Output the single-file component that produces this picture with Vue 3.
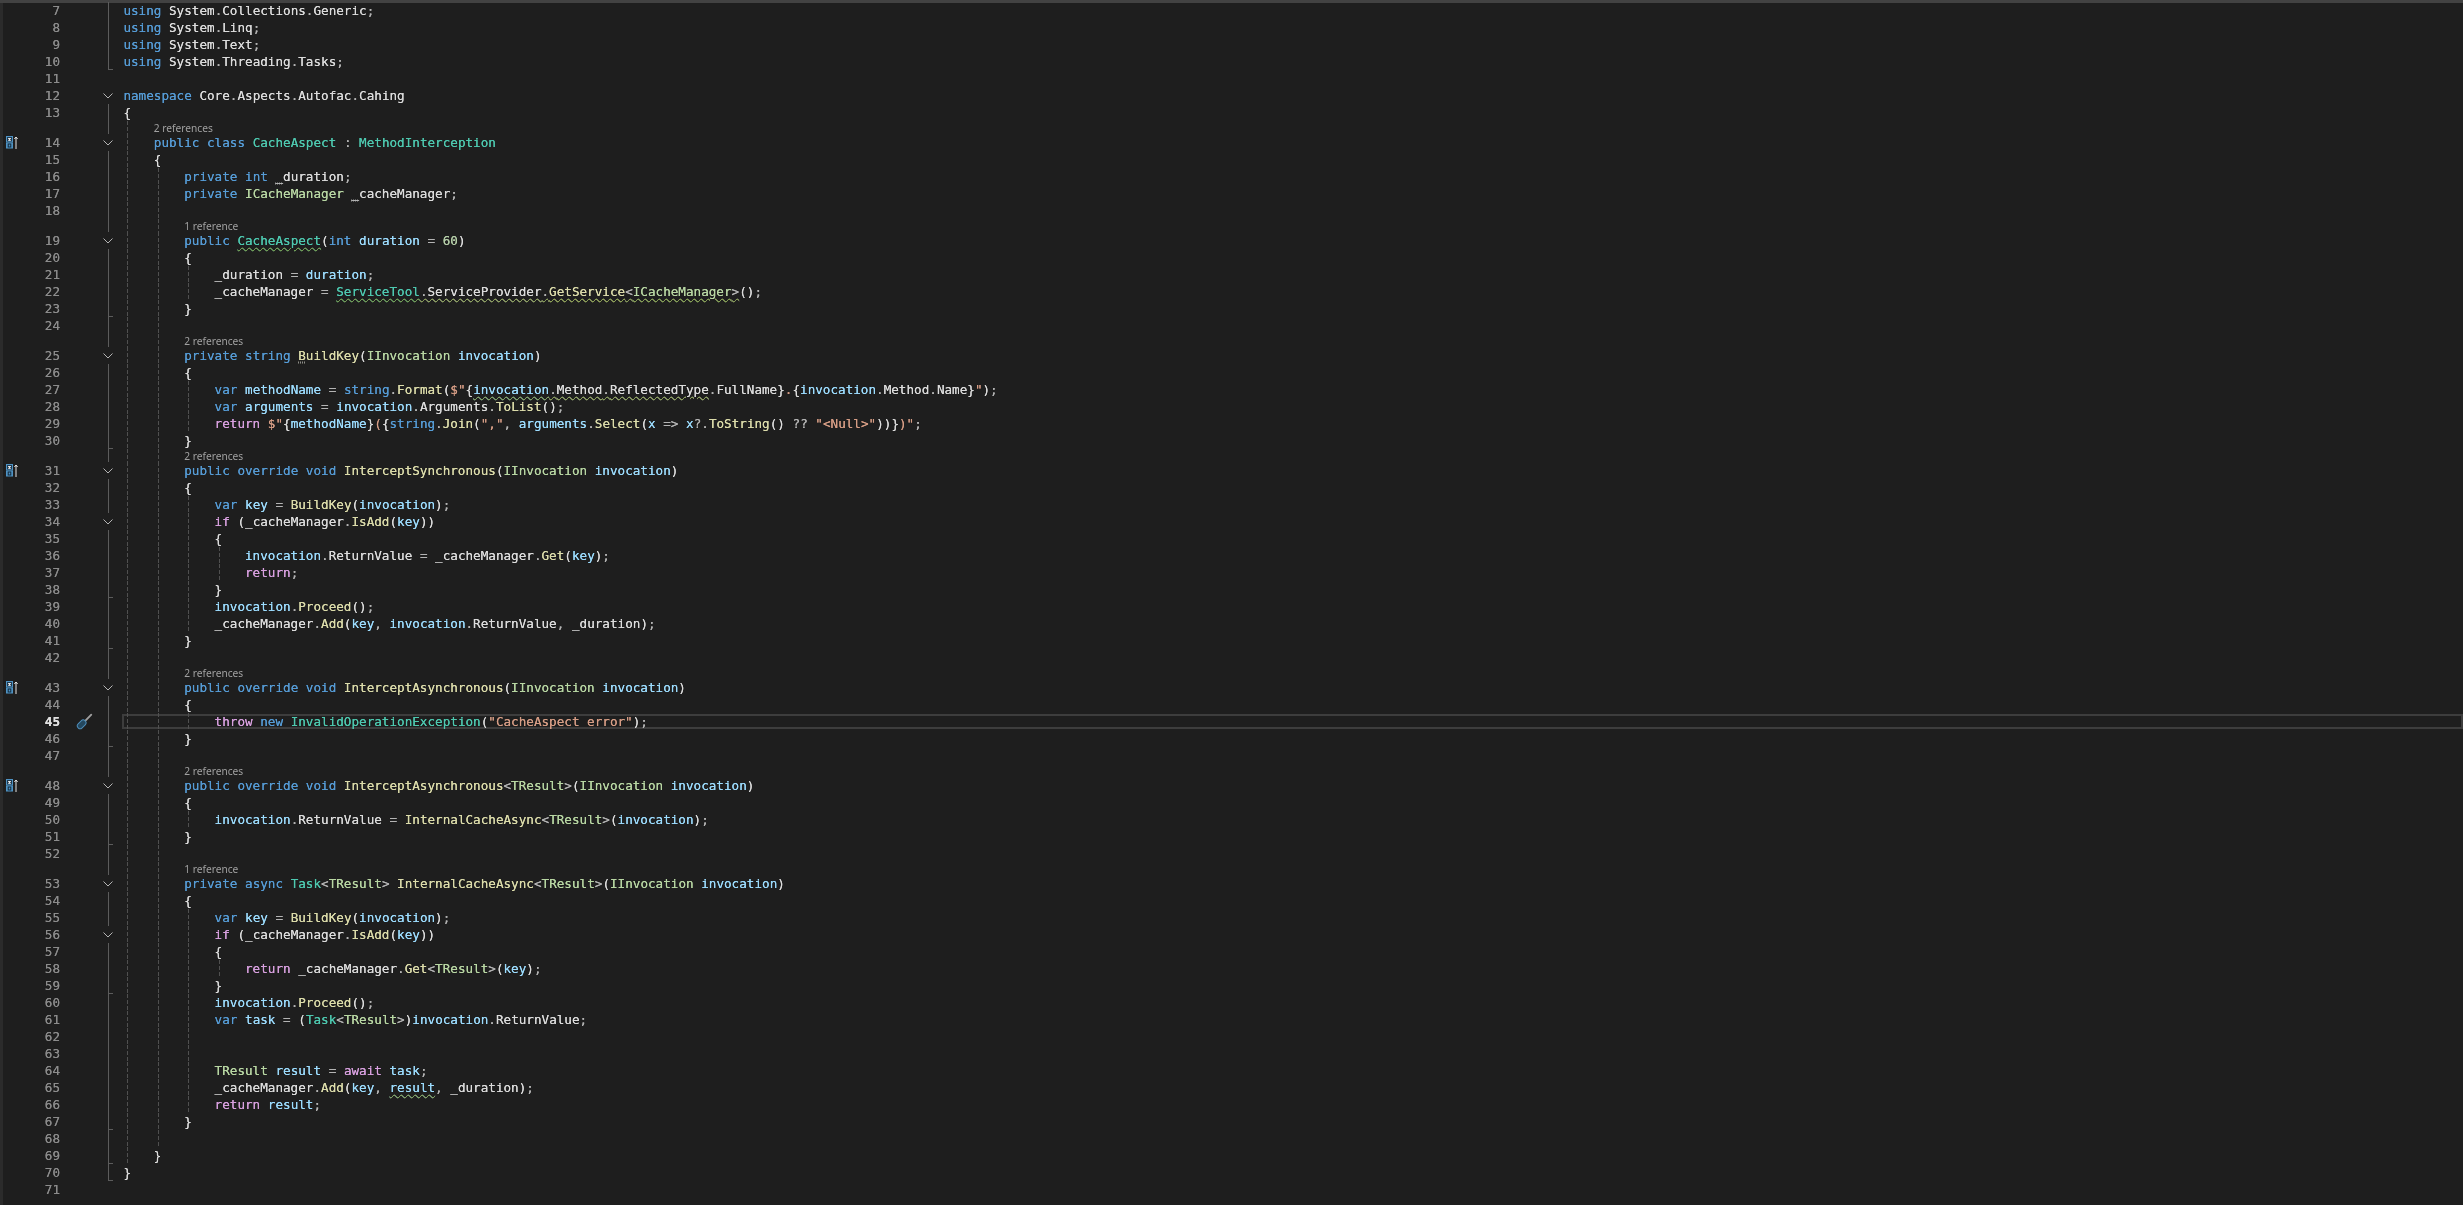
<script setup>
const source = [
  'using System.Collections.Generic;',
  'using System.Linq;',
  'using System.Text;',
  'using System.Threading.Tasks;',
  '',
  'namespace Core.Aspects.Autofac.Cahing',
  '{',
  '    public class CacheAspect : MethodInterception',
  '    {',
  '        private int ^_duration;',
  '        private ICacheManager ^_cacheManager;',
  '',
  '        public ~CacheAspect~(int duration = 60)',
  '        {',
  '            _duration = duration;',
  '            _cacheManager = ~ServiceTool.ServiceProvider.GetService<ICacheManager>~();',
  '        }',
  '',
  '        private string ^BuildKey(IInvocation invocation)',
  '        {',
  '            var methodName = string.Format(`$"`{~invocation.Method.ReflectedType~.FullName}`.`{invocation.Method.Name}`"`);',
  '            var arguments = invocation.Arguments.ToList();',
  '            return `$"`{methodName}`(`{string.Join(",", arguments.Select(x => x?.ToString() ?? "<Null>"))}`)"`;',
  '        }',
  '        public override void InterceptSynchronous(IInvocation invocation)',
  '        {',
  '            var key = BuildKey(invocation);',
  '            if (_cacheManager.IsAdd(key))',
  '            {',
  '                invocation.ReturnValue = _cacheManager.Get(key);',
  '                return;',
  '            }',
  '            invocation.Proceed();',
  '            _cacheManager.Add(key, invocation.ReturnValue, _duration);',
  '        }',
  '',
  '        public override void InterceptAsynchronous(IInvocation invocation)',
  '        {',
  '            throw new InvalidOperationException("CacheAspect error");',
  '        }',
  '',
  '        public override void InterceptAsynchronous<TResult>(IInvocation invocation)',
  '        {',
  '            invocation.ReturnValue = InternalCacheAsync<TResult>(invocation);',
  '        }',
  '',
  '        private async Task<TResult> InternalCacheAsync<TResult>(IInvocation invocation)',
  '        {',
  '            var key = BuildKey(invocation);',
  '            if (_cacheManager.IsAdd(key))',
  '            {',
  '                return _cacheManager.Get<TResult>(key);',
  '            }',
  '            invocation.Proceed();',
  '            var task = (Task<TResult>)invocation.ReturnValue;',
  '',
  '',
  '            TResult result = await task;',
  '            _cacheManager.Add(key, ~result~, _duration);',
  '            return result;',
  '        }',
  '',
  '    }',
  '}',
  ''
]

const sets = {
  kw: 'using namespace public class private int string var override void async new',
  ctrl: 'return if throw await',
  cls: 'CacheAspect MethodInterception ServiceTool InvalidOperationException Task',
  ifc: 'ICacheManager IInvocation TResult',
  loc: 'duration invocation methodName arguments key x task result',
  fn: 'Format Join Select ToString ToList GetService BuildKey InterceptSynchronous InterceptAsynchronous InternalCacheAsync IsAdd Get Add Proceed'
}
const wordClass = {}
for (const c in sets) sets[c].split(' ').forEach(w => { wordClass[w] = c })

function tokenize(text) {
  const out = []
  let sq = false
  const re = /`[^`]*`|~|\^?[A-Za-z_]\w*|\d+|"[^"]*"|\s+|./g
  for (const m of text.matchAll(re)) {
    const t = m[0]
    if (t === '~') { sq = !sq; continue }
    const add = (s, c) => out.push({ t: s, c: c + (sq ? ' sq' : '') })
    if (t[0] === '`') add(t.slice(1, -1), 'str')
    else if (t[0] === '"') add(t, 'str')
    else if (t[0] === '^') {
      add(t[1], 'dot ' + (wordClass[t.slice(1)] || ''))
      add(t.slice(2), wordClass[t.slice(1)] || '')
    }
    else if (/^\d/.test(t)) add(t, 'lit')
    else if (/^[A-Za-z_]/.test(t)) add(t, wordClass[t] || '')
    else if (/^[.;=,:?<>]$/.test(t)) add(t, 'p')
    else add(t, '')
  }
  return out
}

const lens = { 14: '2 references', 19: '1 reference', 25: '2 references', 31: '2 references', 43: '2 references', 48: '2 references', 53: '1 reference' }
const folds = new Set([12, 14, 19, 25, 31, 34, 43, 48, 53, 56])
const ends = new Set([10, 23, 30, 38, 41, 46, 51, 59, 67, 69, 70])
const marks = new Set([14, 31, 43, 48])
const ranges = [
  [[14, 69]],
  [[16, 68]],
  [[21, 22], [27, 29], [33, 40], [45, 45], [50, 50], [55, 66]],
  [[36, 37], [58, 58]]
]
const guidesFor = (n, isLens) =>
  ranges.map((rs, i) => (rs.some(([a, b]) => (isLens ? n > a && n <= b || (i === 0 && n === a) : n >= a && n <= b)) ? i : -1)).filter(i => i >= 0)
const hasLine = n => (n >= 7 && n <= 10) || (n >= 13 && n <= 70)

const rows = []
source.forEach((text, i) => {
  const n = i + 7
  const col = text.length - text.trimStart().length
  if (lens[n]) rows.push({ id: 'l' + n, lens: lens[n], indent: col * 7.6, guides: guidesFor(n, true) })
  rows.push({
    id: 'c' + n,
    n,
    tokens: tokenize(text),
    guides: guidesFor(n, false),
    fold: folds.has(n),
    line: hasLine(n) && !folds.has(n),
    end: ends.has(n),
    mark: marks.has(n),
    current: n === 45
  })
})
</script>

<template>
  <div class="editor">
    <div class="topbar"></div>
    <div class="lines">
      <template v-for="r in rows" :key="r.id">
        <div v-if="r.lens" class="row lensrow">
          <div class="glyph"></div>
          <div class="num"></div>
          <div class="tools"></div>
          <div class="fold"><span class="vline"></span></div>
          <div class="code">
            <i v-for="g in r.guides" :key="g" class="guide" :class="'g' + g"></i>
            <span class="lens" :style="{ paddingLeft: 1.4 + r.indent + 'px' }">{{ r.lens }}</span>
          </div>
        </div>
        <div v-else class="row">
          <div class="glyph">
            <svg v-if="r.mark" class="mark" width="12" height="13" viewBox="0 0 12 13">
              <rect x="0.5" y="0.5" width="6" height="5.5" fill="#1f3a50" stroke="#4f93c4" />
              <rect x="2" y="2" width="3" height="0.9" fill="#e8e8e8" />
              <rect x="3" y="2" width="1" height="2.6" fill="#e8e8e8" />
              <rect x="2" y="3.8" width="3" height="0.9" fill="#e8e8e8" />
              <rect x="0" y="6.5" width="7" height="6" fill="#4f93c4" />
              <rect x="2.2" y="8" width="2.6" height="3" fill="none" stroke="#12283a" />
              <path d="M10 13V1M8.4 3L10 1l1.6 2" fill="none" stroke="#e4e4e4" stroke-width="1" />
            </svg>
          </div>
          <div class="num" :class="{ active: r.current }">{{ r.n }}</div>
          <div class="tools">
            <svg v-if="r.current" width="17" height="17" viewBox="0 0 18 18">
              <g transform="rotate(45 9 9)">
                <rect x="8" y="-2" width="2" height="10" rx="0.8" fill="#a0a0a0" />
                <rect x="6" y="8" width="6" height="10.5" rx="3" fill="#24485f" stroke="#4f8fbc" stroke-width="1" />
              </g>
            </svg>
          </div>
          <div class="fold">
            <svg v-if="r.fold" width="10" height="6" viewBox="0 0 10 6">
              <path d="M0.5 0.5L5 5L9.5 0.5" fill="none" stroke="#b4b4b4" stroke-width="1" />
            </svg>
            <span v-else-if="r.line" class="vline" :class="{ end: r.end }"></span>
          </div>
          <div class="code" :class="{ current: r.current }">
            <i v-for="g in r.guides" :key="g" class="guide" :class="'g' + g"></i>
            <span class="src"><span v-for="(t, i) in r.tokens" :key="i" :class="t.c">{{ t.t }}</span></span>
          </div>
        </div>
      </template>
    </div>
  </div>
</template>

<style scoped>
.editor {
  width: 2463px;
  height: 1205px;
  overflow: hidden;
  background: #1e1e1e;
  box-shadow: inset 3px 0 0 #2b2b2b;
  color: #dcdcdc;
  font-family: "DejaVu Sans Mono", "Liberation Mono", monospace;
  font-size: 12.63px;
}
.topbar {
  height: 3px;
  background: #424242;
}
.lines {
  margin-top: -1px;
  filter: blur(0.3px);
}
.row {
  display: flex;
  height: 17px;
  line-height: 17px;
}
.lensrow {
  height: 13px;
  line-height: 13px;
}
.glyph {
  width: 36px;
  padding-left: 6px;
  box-sizing: border-box;
  display: flex;
  align-items: center;
}
.mark {
  display: block;
}
.num {
  width: 24px;
  text-align: right;
  color: #8c8c8c;
  text-shadow: 0 0 0.5px currentColor;
}
.num.active {
  color: #e0e0e0;
  font-weight: 700;
}
.tools {
  width: 39px;
  display: flex;
  align-items: center;
  justify-content: center;
  padding-left: 9px;
  box-sizing: border-box;
}
.fold {
  width: 18px;
  position: relative;
  display: flex;
  align-items: center;
  justify-content: center;
}
.vline {
  position: absolute;
  left: 9px;
  top: 0;
  bottom: 0;
  width: 1px;
  background: #5c5c5c;
}
.vline.end::after {
  content: "";
  position: absolute;
  left: 0;
  bottom: 0;
  width: 5px;
  height: 1px;
  background: #5c5c5c;
}
.code {
  flex: 1;
  margin-left: 5px;
  position: relative;
  padding-left: 1.4px;
  white-space: pre;
}
.lensrow .code {
  padding-left: 0;
}
.code.current::before {
  content: "";
  position: absolute;
  left: 0;
  right: 0;
  top: 1px;
  height: 15px;
  border: 2px solid #3d3d3d;
  box-sizing: border-box;
}
.src {
  position: relative;
  text-shadow: 0 0 0.6px currentColor;
}
.guide {
  position: absolute;
  top: 0;
  bottom: 0;
  width: 1px;
  background: repeating-linear-gradient(#505050 0 4px, transparent 4px 6px);
}
.g0 { left: 4.5px; }
.g1 { left: 35.5px; }
.g2 { left: 65.5px; }
.g3 { left: 96.5px; }
.lens {
  position: relative;
  font-family: "Noto Sans", sans-serif;
  font-size: 10.2px;
  color: #a0a0a0;
}
.kw { color: #569cd6; }
.ctrl { color: #d8a0df; }
.cls { color: #4ec9b0; }
.ifc { color: #b8d7a3; }
.loc { color: #9cdcfe; }
.fn { color: #dcdcaa; }
.str { color: #d69d85; }
.lit { color: #b5cea8; }
.p { color: #b4b4b4; }
.sq {
  text-decoration: underline wavy #7f9a44;
  text-decoration-thickness: 1px;
  text-underline-offset: 2px;
}
.dot {
  text-decoration: underline dotted #8a8a8a;
  text-underline-offset: 2px;
}
</style>

<style>
html, body { background: #1e1e1e; }
</style>
